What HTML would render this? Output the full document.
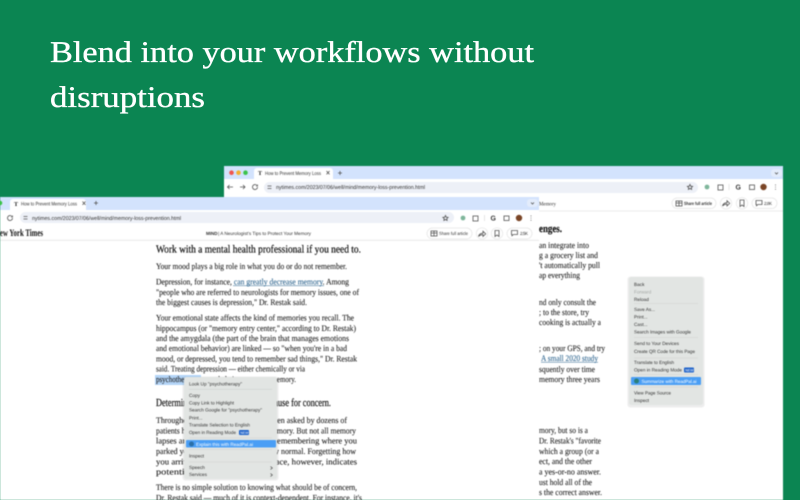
<!DOCTYPE html>
<html><head><meta charset="utf-8"><title>Blend into your workflows</title>
<style>
html,body{margin:0;padding:0;width:800px;height:500px;overflow:hidden;background:#0b8552}
svg{position:absolute;left:0;top:0;display:block}
text{font-family:"Liberation Serif",serif;text-rendering:geometricPrecision}
.t{stroke:#fff;stroke-width:.35px}
.b{filter:blur(.42px)}
.a{font-size:8.6px;fill:#222;stroke:#222;stroke-width:.1px}
.h{font-size:10.8px;fill:#111;stroke:#111;stroke-width:.2px}
.s{font-family:"Liberation Sans",sans-serif;fill:#333}
.m{font-family:"Liberation Sans",sans-serif;font-size:4.7px;fill:#333}
.i{fill:none;stroke:#555;stroke-width:.8}
.p{fill:#fff;stroke:#e4e4e4;stroke-width:.7}
.l{stroke:#cfd2d0;stroke-width:.6}
</style></head><body>
<svg width="800" height="500" viewBox="0 0 800 500" xmlns="http://www.w3.org/2000/svg">
<text class="t" x="50" y="62" font-size="30" fill="#fff" textLength="484" lengthAdjust="spacingAndGlyphs">Blend into your workflows without</text>
<text class="t" x="50" y="107" font-size="30" fill="#fff" textLength="155" lengthAdjust="spacingAndGlyphs">disruptions</text>

<g class="b">
<!-- back window -->
<rect x="224" y="166" width="559" height="334" fill="#fff"/>
<rect x="224" y="166" width="559" height="13" fill="#d3e3fd"/>
<circle cx="231.500" cy="172.700" r="2.300" fill="#f0564f"/><circle cx="238.500" cy="172.700" r="2.300" fill="#f5b02e"/><circle cx="245.500" cy="172.700" r="2.300" fill="#3cc34a"/>
<path d="M254 179v-8a3 3 0 0 1 3-3h73a3 3 0 0 1 3 3v8z" fill="#fff"/>
<text class="s" x="265" y="174.800" font-size="5.200" textLength="56" lengthAdjust="spacingAndGlyphs">How to Prevent Memory Loss</text>
<text x="258" y="175.200" font-size="6" font-weight="bold" fill="#222">T</text>
<path class="i" d="M326.500 171l3 3.400m0-3.400l-3 3.400M340 171v4m-2-2h4"/>
<rect x="771" y="169" width="11" height="8" rx="3" fill="#e3ecfb"/><path class="i" d="M775 172.500l1.500 1.500 1.500-1.500"/>
<rect x="224" y="179" width="559" height="16" fill="#fff"/>
<path class="i" d="M233 187h-5.500m2-2l-2 2 2 2M240 187h5m-2-2l2 2-2 2"/>
<path class="i" d="M257.500 187a2.500 2.500 0 1 1-.8-1.800M257.500 184.500v1.500h-1.500"/>
<rect x="264" y="182" width="434" height="11" rx="5.500" fill="#edf0f7"/>
<path class="i" d="M267.500 186h4m-4 2.500h4"/>
<text class="s" x="276" y="189.200" font-size="5.500" textLength="149" lengthAdjust="spacingAndGlyphs">nytimes.com/2023/07/06/well/mind/memory-loss-prevention.html</text>
<path class="i" d="M690 184.500l.8 1.700 1.800.2-1.300 1.200.3 1.800-1.600-.9-1.600.9.300-1.800-1.300-1.200 1.800-.2z"/>
<circle cx="707" cy="187" r="2.400" fill="#7fb69b"/>
<rect x="718" y="185" width="5" height="5" class="i"/>
<path d="M729 184v6" stroke="#ccc" stroke-width=".5"/>
<text class="s" x="735.500" y="189.500" font-size="7" font-weight="bold" fill="#444">G</text>
<rect x="749.500" y="185" width="5" height="4.500" class="i"/>
<circle cx="763.500" cy="187" r="3.200" fill="#7a4526"/>
<path d="M775.500 184.500v.7m0 1.500v.7m0 1.500v.7" stroke="#555" stroke-width=".9"/>
<path d="M224 211h559" stroke="#e6e6e6" stroke-width=".8"/>
<text x="539" y="205.500" font-size="5.500" fill="#333" textLength="17" lengthAdjust="spacingAndGlyphs">Memory</text>
<rect class="p" x="672" y="198" width="44" height="10.500" rx="5.200"/>
<rect class="i" x="676" y="201" width="6" height="5"/><path class="i" d="M676 203h6m-3-2v5"/>
<text class="s" x="684" y="205" font-size="4.600" font-weight="bold" textLength="28" lengthAdjust="spacingAndGlyphs">Share full article</text>
<circle class="p" cx="726" cy="203.300" r="5.700"/><path class="i" d="M722.500 206c.7-2.500 2.200-3.300 4.500-3.300v-2l2.700 2.700-2.700 2.500v-1.700c-1.800 0-3.300.5-4.500 1.800z"/>
<circle class="p" cx="742" cy="203.300" r="5.700"/><path class="i" d="M740 200h4v6.500l-2-1.500-2 1.500z"/>
<rect class="p" x="752" y="198" width="25" height="10.500" rx="5.200"/><path class="i" d="M756 200.500h6v4h-4l-1.500 1.300v-1.300h-.5z"/>
<text class="s" x="764" y="205" font-size="4.500" textLength="8">2.8K</text>

<g>
<text class="h" x="539" y="232" font-weight="bold" textLength="23" lengthAdjust="spacingAndGlyphs">enges.</text>
<text class="a" x="539" y="248" textLength="50" lengthAdjust="spacingAndGlyphs">an integrate into</text>
<text class="a" x="539" y="258" textLength="59" lengthAdjust="spacingAndGlyphs">g a grocery list and</text>
<text class="a" x="539" y="268" textLength="61" lengthAdjust="spacingAndGlyphs">'t automatically pull</text>
<text class="a" x="539" y="278" textLength="41" lengthAdjust="spacingAndGlyphs">ap everything</text>
<text class="a" x="539" y="305" textLength="57" lengthAdjust="spacingAndGlyphs">nd only consult the</text>
<text class="a" x="539" y="315" textLength="50" lengthAdjust="spacingAndGlyphs">; to the store, try</text>
<text class="a" x="539" y="325" textLength="62" lengthAdjust="spacingAndGlyphs">cooking is actually a</text>
<text class="a" x="539" y="351" textLength="66" lengthAdjust="spacingAndGlyphs">; on your GPS, and try</text>
<text class="a" x="541" y="361" style="fill:#326891;stroke:#326891" textLength="57" lengthAdjust="spacingAndGlyphs">A small 2020 study</text>
<path d="M541 362.300h57" stroke="#326891" stroke-width=".5"/>
<text class="a" x="539" y="372" textLength="56" lengthAdjust="spacingAndGlyphs">squently over time</text>
<text class="a" x="539" y="382" textLength="61" lengthAdjust="spacingAndGlyphs">memory three years</text>
<text class="a" x="539" y="433" textLength="49" lengthAdjust="spacingAndGlyphs">mory, but so is a</text>
<text class="a" x="539" y="443.500" textLength="62" lengthAdjust="spacingAndGlyphs">Dr. Restak's "favorite</text>
<text class="a" x="539" y="454" textLength="60" lengthAdjust="spacingAndGlyphs">which a group (or a</text>
<text class="a" x="539" y="464" textLength="53" lengthAdjust="spacingAndGlyphs">ect, and the other</text>
<text class="a" x="539" y="474.500" textLength="62" lengthAdjust="spacingAndGlyphs">a yes-or-no answer.</text>
<text class="a" x="539" y="485" textLength="53" lengthAdjust="spacingAndGlyphs">ust hold all of the</text>
<text class="a" x="539" y="495" textLength="63" lengthAdjust="spacingAndGlyphs">s the correct answer.</text>
</g>

<!-- back menu -->
<rect x="627.500" y="276.500" width="77" height="131" rx="3" fill="#000" opacity=".07"/>
<rect x="629" y="277" width="74" height="128" rx="2.500" fill="#e2e5e3"/>
<text class="m" x="634" y="286">Back</text>
<text class="m" x="634" y="293.500" style="fill:#a5a8a6">Forward</text>
<text class="m" x="634" y="301">Reload</text>
<path class="l" d="M634 303.500h64M634 337.500h64M634 358h64M634 374.500h64M634 387h64"/>
<text class="m" x="634" y="311">Save As...</text>
<text class="m" x="634" y="318.500">Print...</text>
<text class="m" x="634" y="326">Cast...</text>
<text class="m" x="634" y="333.500" textLength="57" lengthAdjust="spacingAndGlyphs">Search Images with Google</text>
<text class="m" x="634" y="345" textLength="45" lengthAdjust="spacingAndGlyphs">Send to Your Devices</text>
<text class="m" x="634" y="353" textLength="61" lengthAdjust="spacingAndGlyphs">Create QR Code for this Page</text>
<text class="m" x="634" y="364" textLength="40" lengthAdjust="spacingAndGlyphs">Translate to English</text>
<text class="m" x="634" y="371.500" textLength="48" lengthAdjust="spacingAndGlyphs">Open in Reading Mode</text>
<rect x="684" y="367.500" width="10" height="5" rx="1" fill="#1a5fc8"/>
<text class="s" x="685.300" y="371.500" font-size="3.600" style="fill:#fff">NEW</text>
<rect x="631" y="377" width="70" height="8" rx="1" fill="#4a9ef5"/>
<circle cx="636.500" cy="381" r="2.500" fill="#2b7f7a"/>
<text class="m" x="641.500" y="383" style="fill:#fff" textLength="55" lengthAdjust="spacingAndGlyphs">Summarize with ReadPal.ai</text>
<text class="m" x="634" y="394.500" textLength="37" lengthAdjust="spacingAndGlyphs">View Page Source</text>
<text class="m" x="634" y="402">Inspect</text>

<!-- front window -->
<rect x="0" y="197" width="539" height="303" fill="#fff"/>
<rect x="0" y="197" width="539" height="13" fill="#d3e3fd"/>
<circle cx="0" cy="203" r="2.300" fill="#3cc34a"/>
<path d="M10 210v-8a3 3 0 0 1 3-3h70a3 3 0 0 1 3 3v8z" fill="#fff"/>
<text x="14" y="206" font-size="6" font-weight="bold" fill="#222">T</text>
<text class="s" x="21" y="205.300" font-size="5.200" textLength="56" lengthAdjust="spacingAndGlyphs">How to Prevent Memory Loss</text>
<path class="i" d="M82.500 201.500l3 3.400m0-3.400l-3 3.400M96 201v4m-2-2h4"/>
<rect x="527" y="199" width="11" height="8" rx="3" fill="#e3ecfb"/><path class="i" d="M531 202.500l1.500 1.500 1.500-1.500"/>
<rect x="0" y="210" width="539" height="16" fill="#fff"/>
<path class="i" d="M12.500 218a2.500 2.500 0 1 1-.8-1.800M12.500 215.500v1.500h-1.500"/>
<rect x="20" y="212" width="434" height="11" rx="5.500" fill="#edf0f7"/>
<path class="i" d="M23.500 216.500h4m-4 2.500h4"/>
<text class="s" x="32" y="219.800" font-size="5.500" textLength="149" lengthAdjust="spacingAndGlyphs">nytimes.com/2023/07/06/well/mind/memory-loss-prevention.html</text>
<path class="i" d="M445.500 215.500l.8 1.700 1.800.2-1.300 1.200.3 1.800-1.600-.9-1.600.9.300-1.800-1.300-1.200 1.800-.2z"/>
<circle cx="463" cy="218" r="2.400" fill="#7fb69b"/>
<rect x="473" y="216" width="5" height="5" class="i"/>
<path d="M484.500 215v6" stroke="#ccc" stroke-width=".5"/>
<text class="s" x="490.500" y="220.500" font-size="7" font-weight="bold" fill="#444">G</text>
<rect x="504" y="216" width="5" height="4.500" class="i"/>
<circle cx="519" cy="218" r="3.200" fill="#7a4526"/>
<path d="M531 215.500v.7m0 1.500v.7m0 1.500v.7" stroke="#555" stroke-width=".9"/>
<path d="M0 240.300h539" stroke="#e6e6e6" stroke-width=".8"/>
<text x="-5" y="236" font-size="10" font-weight="bold" fill="#111" textLength="48" lengthAdjust="spacingAndGlyphs">New York Times</text>
<text class="s" x="206" y="235" font-size="4.500" font-weight="bold" fill="#222">MIND</text>
<text class="s" x="218" y="235" font-size="4.700" textLength="93" lengthAdjust="spacingAndGlyphs">|  A Neurologist's Tips to Protect Your Memory</text>
<rect class="p" x="427" y="228" width="45" height="11" rx="5.500"/>
<rect class="i" x="431" y="231" width="6" height="5"/><path class="i" d="M431 233h6m-3-2v5"/>
<text class="s" x="439" y="235" font-size="4.600" textLength="29" lengthAdjust="spacingAndGlyphs">Share full article</text>
<circle class="p" cx="482" cy="233.500" r="5.700"/><path class="i" d="M478.500 236.500c.7-2.500 2.200-3.300 4.500-3.300v-2l2.700 2.700-2.700 2.500v-1.700c-1.800 0-3.300.5-4.500 1.800z"/>
<circle class="p" cx="497" cy="233.500" r="5.700"/><path class="i" d="M495 230.500h4v6l-2-1.500-2 1.500z"/>
<rect class="p" x="507" y="228" width="25" height="11" rx="5.500"/><path class="i" d="M511.500 230.500h6v4h-4l-1.500 1.300v-1.300h-.5z"/>
<text class="s" x="520" y="235" font-size="4.500" textLength="8">2.5K</text>

<text class="h" x="156" y="252.500" textLength="205" lengthAdjust="spacingAndGlyphs">Work with a mental health professional if you need to.</text>
<text class="a" x="156" y="269" textLength="191" lengthAdjust="spacingAndGlyphs">Your mood plays a big role in what you do or do not remember.</text>
<text class="a" x="156" y="284.500" textLength="193" lengthAdjust="spacingAndGlyphs">Depression, for instance, <tspan style="fill:#326891;stroke:#326891">can greatly decrease memory</tspan>. Among</text>
<path d="M233 285.700h91" stroke="#326891" stroke-width=".5"/>
<text class="a" x="156" y="294.800" textLength="203" lengthAdjust="spacingAndGlyphs">"people who are referred to neurologists for memory issues, one of</text>
<text class="a" x="156" y="305" textLength="151" lengthAdjust="spacingAndGlyphs">the biggest causes is depression," Dr. Restak said.</text>
<text class="a" x="156" y="320.500" textLength="198" lengthAdjust="spacingAndGlyphs">Your emotional state affects the kind of memories you recall. The</text>
<text class="a" x="156" y="330.800" textLength="200" lengthAdjust="spacingAndGlyphs">hippocampus (or "memory entry center," according to Dr. Restak)</text>
<text class="a" x="156" y="341" textLength="193" lengthAdjust="spacingAndGlyphs">and the amygdala (the part of the brain that manages emotions</text>
<text class="a" x="156" y="351.200" textLength="191" lengthAdjust="spacingAndGlyphs">and emotional behavior) are linked — so "when you're in a bad</text>
<text class="a" x="156" y="361.500" textLength="201" lengthAdjust="spacingAndGlyphs">mood, or depressed, you tend to remember sad things," Dr. Restak</text>
<text class="a" x="156" y="371.700" textLength="149" lengthAdjust="spacingAndGlyphs">said. Treating depression — either chemically or via</text>
<rect x="155" y="375" width="46" height="10" fill="#b3d4f7"/>
<text class="a" x="156" y="382" textLength="140" lengthAdjust="spacingAndGlyphs">psychotherapy — can help improve your memory.</text>
<text class="h" x="156" y="406" textLength="175" lengthAdjust="spacingAndGlyphs">Determine when memory loss is a cause for concern.</text>
<text class="a" x="156" y="423" textLength="191" lengthAdjust="spacingAndGlyphs">Throughout my career, I have often been asked by dozens of</text>
<text class="a" x="156" y="433.300" textLength="200" lengthAdjust="spacingAndGlyphs">patients how they can improve their memory. But not all memory</text>
<text class="a" x="156" y="443.700" textLength="201" lengthAdjust="spacingAndGlyphs">lapses are a cause for concern; not remembering where you</text>
<text class="a" x="156" y="454" textLength="200" lengthAdjust="spacingAndGlyphs">parked your car, for example, is totally normal. Forgetting how</text>
<text class="a" x="156" y="464.300" textLength="201" lengthAdjust="spacingAndGlyphs">you arrived at a certain familiar place, however, indicates</text>
<text class="a" x="156" y="474.700" textLength="80" lengthAdjust="spacingAndGlyphs">potential problems.</text>
<text class="a" x="156" y="490" textLength="201" lengthAdjust="spacingAndGlyphs">There is no simple solution to knowing what should be of concern,</text>
<text class="a" x="156" y="500.500" textLength="206" lengthAdjust="spacingAndGlyphs">Dr. Restak said — much of it is context-dependent. For instance, it's</text>

<!-- front menu -->
<rect x="182.500" y="376.500" width="96" height="104" rx="3" fill="#000" opacity=".07"/>
<rect x="184" y="377" width="93" height="102" rx="2.500" fill="#e2e5e3"/>
<text class="m" x="189" y="385.500" textLength="53" lengthAdjust="spacingAndGlyphs">Look Up "psychotherapy"</text>
<path class="l" d="M189 389.300h83M189 438h83M189 449.500h83M189 462h83"/>
<text class="m" x="189" y="397">Copy</text>
<text class="m" x="189" y="404.500" textLength="45" lengthAdjust="spacingAndGlyphs">Copy Link to Highlight</text>
<text class="m" x="189" y="411.500" textLength="73" lengthAdjust="spacingAndGlyphs">Search Google for "psychotherapy"</text>
<text class="m" x="189" y="419.500">Print...</text>
<text class="m" x="189" y="426.500" textLength="61" lengthAdjust="spacingAndGlyphs">Translate Selection to English</text>
<text class="m" x="189" y="434" textLength="47" lengthAdjust="spacingAndGlyphs">Open in Reading Mode</text>
<rect x="239" y="430" width="10" height="5" rx="1" fill="#1a5fc8"/>
<text class="s" x="240.300" y="434" font-size="3.600" style="fill:#fff">NEW</text>
<rect x="186" y="440" width="90" height="7.500" rx="1" fill="#4a9ef5"/>
<circle cx="191.500" cy="444" r="2.500" fill="#2b6fa8"/>
<text class="m" x="196" y="446" style="fill:#fff" textLength="57" lengthAdjust="spacingAndGlyphs">Explain this with ReadPal.ai</text>
<text class="m" x="189" y="457.500">Inspect</text>
<text class="m" x="189" y="469">Speech</text>
<text class="m" x="189" y="476">Services</text>
<path class="i" d="M270.500 466.500l1.800 1.500-1.800 1.500M270.500 473.500l1.800 1.500-1.800 1.500"/>
</g>
</svg>
</body></html>
